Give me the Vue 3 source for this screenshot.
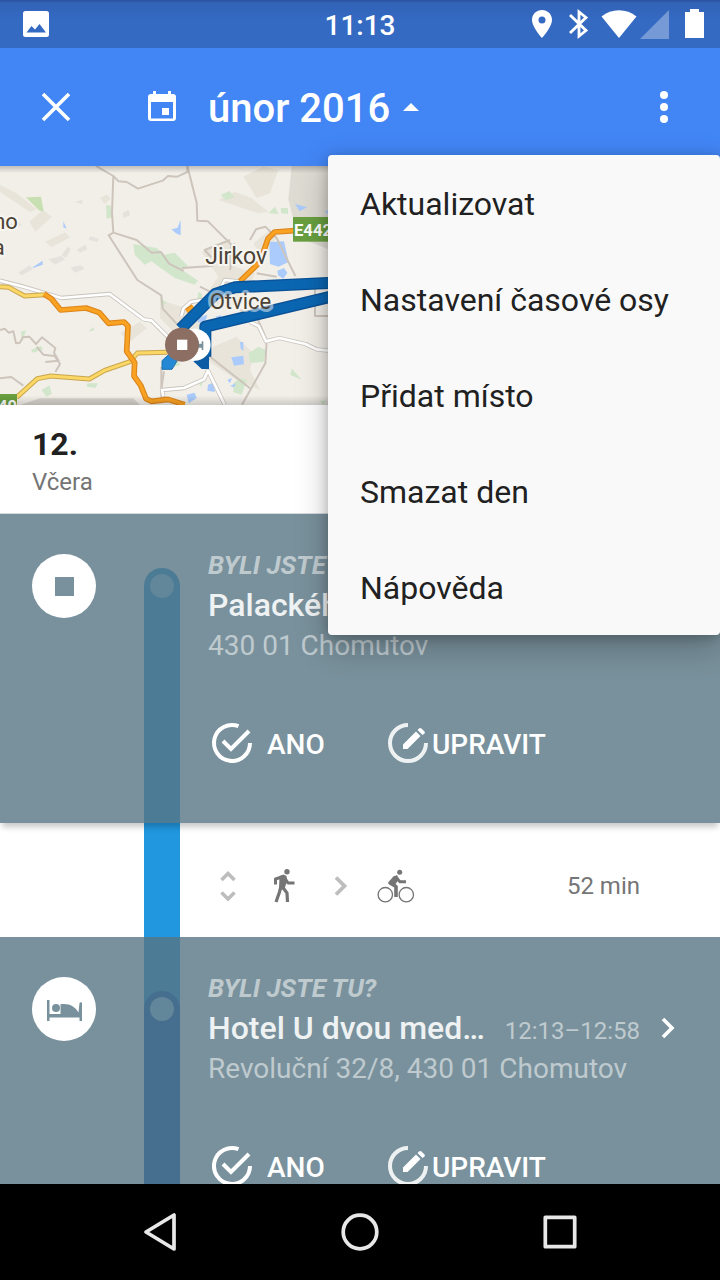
<template>
  <div class="screen">
    <header class="status-bar">
      <svg class="status-photo" viewBox="0 0 26 26">
        <path d="M2.500 0h21a2.500 2.500 0 0 1 2.500 2.500v21a2.500 2.500 0 0 1-2.500 2.500h-21a2.500 2.500 0 0 1-2.500-2.500v-21a2.500 2.500 0 0 1 2.500-2.500zM3.500 21.500h19.500L16.500 13l-4.500 5.500-3.500-3.500z" fill="#fff" fill-rule="evenodd" />
      </svg>
      <span class="clock">11:13</span>
      <svg class="status-icons" viewBox="0 0 176 30">
        <path d="M10 1C4.400 1 0 5.300 0 10.800 0 18.200 10 29 10 29s10-10.800 10-18.200C20 5.300 15.600 1 10 1zm0 6.500a3.500 3.500 0 1 1 0 7 3.500 3.500 0 0 1 0-7z" fill="#fff" fill-rule="evenodd" />
        <path d="M38 6l16 15.500L47 27V3l7 5.500L38 24" fill="none" stroke="#fff" stroke-width="2.800" />
        <path d="M69.500 7.500C79.500-.8 94.500-.8 104.500 7.500L87 29z" fill="#fff" />
        <path d="M137 1v29h-29z" fill="#fff" fill-opacity=".32" />
        <path d="M153 3h5V0h9v3h5v26h-19z" fill="#fff" />
      </svg>
    </header>

    <div class="toolbar">
      <button class="tool close" aria-label="Zavřít">
        <svg viewBox="0 0 48 48"><path d="M11 11l26 26M37 11L11 37" stroke="#fff" stroke-width="3.600" /></svg>
      </button>
      <button class="month">
        <svg class="calendar" viewBox="0 0 48 48">
          <path d="M15 8h3v3h12V8h3v3h2a3 3 0 0 1 3 3v21a3 3 0 0 1-3 3H13a3 3 0 0 1-3-3V14a3 3 0 0 1 3-3h2zM13 19v16.500h22V19zM24 25h7v7h-7z" fill="#fff" fill-rule="evenodd" />
        </svg>
        <span>únor 2016</span>
        <svg class="caret" viewBox="0 0 16 8"><path d="M0 8l8-8 8 8z" fill="#fff" /></svg>
      </button>
      <button class="tool" aria-label="Další možnosti" @click="menuOpen = !menuOpen">
        <svg viewBox="0 0 48 48" fill="#fff">
          <circle cx="24" cy="12" r="4" /><circle cx="24" cy="24" r="4" /><circle cx="24" cy="36" r="4" />
        </svg>
      </button>
    </div>

    <main class="timeline">
      <svg class="map" viewBox="0 18 2160 717" preserveAspectRatio="xMinYMin slice">
        <defs>
          <linearGradient id="edge" x1="0" y1="0" x2="0" y2="1">
            <stop offset="0" stop-color="#000" stop-opacity=".2" />
            <stop offset=".03" stop-color="#000" stop-opacity="0" />
            <stop offset=".96" stop-color="#000" stop-opacity="0" />
            <stop offset="1" stop-color="#000" stop-opacity=".15" />
          </linearGradient>
        </defs>
        <rect y="18" width="2160" height="717" fill="#f2efe9" />
        <!-- built-up areas -->
        <g fill="#e8e4d9">
          <path d="M0 75l50 25 60 48-20 8-90-60zM88 185l40-35 28 20-50 45zM135 245l60-28 15 15-55 30zM730 50l60-30 45 10-25 70-40 15zM655 120l50-25 50 20 50 40-30 5-60-20zM605 275l80-35 30 30-10 50 60 20-40 90-80 20-45-20 55-80zM480 420l80 25 60 60-20 70-60-40-60-60zM760 250l50-40 20 20-40 70zM640 560l70-30 50 50-10 50 30 60-70-30-90-60zM360 520l60-35 20 20-50 40zM300 115l20-12 12 14-18 15z" />
          <path d="M875 18h110v250l-75-30-30-60-15-60z" fill="#dedbd3" />
          <path d="M60 735l60-20 280 0 20 20z" fill="#d6d3cb" />
        </g>
        <g fill="#e3e2dc">
          <path d="M25 195l30-12 10 12-30 14zM145 298l40-10 10 10-30 16zM185 285l18-24 10 6-14 26zM230 270l26-16 6 14-22 10zM55 338l34-22 10 12-34 18zM212 322l30-6 12 10-30 12zM270 228l26 8-4 10-26-6zM368 160l18-10 4 16-20 8zM225 125l24-6-4 14z" />
        </g>
        <!-- woods -->
        <g fill="#d2e6cb">
          <path d="M78 112l45-2 8 45-14-4z" fill="#c7dfb1" />
          <path d="M318 135l14 2 8 34-20 5zM400 252l70 12 24 20 30-6 40 40-20 10 50 34-10 12-60-20-70-50-20 10-30-30-4-30zM662 105l26-12 16 18-26 10zM805 160l20-20 10 22zM842 144l22 0 0 18-20-2zM595 395l12 8-4 24-12-6zM480 410l20 20-16 8zM745 580l30-20 22 10-6 35-40 4zM700 670l20-15 20 5-15 45-25-8zM875 625l30 34-34-14zM62 515l16-4-10 34zM92 570l30-12 8 10-30 10zM125 690l24-14 6 26-16 8zM262 670l32 0-8 14-26-4zM508 605l24-4 10 14-20 6zM265 515l14-14 4 10zM590 665l20-5-6 20z" />
          <path d="M960 722h18l-8 12z" />
        </g>
        <g fill="#aacbfc">
          <path d="M885 132l36 10-22 12zM808 246l44-2 14 62-30 14-26-8zM832 332l20-8 10 14-12 18-16-10zM514 208l18-4 10-24v46l-14-6zM98 322l30-20v12l-28 10zM190 184l10 22-10-4zM592 474l30-10-4 16-24 8zM645 470l18-4 0 14zM694 592l36-5 2 26-30 4zM720 546l10 0 0 26-8-6zM624 674l20-8v30l-22-4zM560 704l24-6 6 16-24 16zM682 660l14-6-6 16zM690 678l18-8-6 12z" />
          <path d="M972 152h12v10z" />
        </g>
        <!-- minor roads -->
        <g fill="none" stroke="#cdc5bc" stroke-width="6" stroke-linejoin="round">
          <path d="M288 18l52 30-4 110 4 60 70 22 45 38 28-2 24 35 44 22" />
          <path d="M340 48l16 16 24 2 34 20 74-24 16-14 28 2 30-14V18" />
          <path d="M562 18l28 110 2 54 32 2 58 58 12 12-4 60" />
          <path d="M340 218l-14 8 86 134 72 46 4 40 50 54" />
          <path d="M0 510l14-4 12 12 14-4 8 36 12-2 8-16 20-2 20 22 18-20 40 32-4 14 14 24-40 4" />
          <path d="M110 560l20 24 34 4 16 24-14 24" />
          <path d="M0 655l34-4 36 26" />
          <path d="M750 240l18-32 28-8 34 34 56 114" />
          <path d="M690 240l-76 30 20 22M546 324l90-6 10-20M600 380l60 30M484 620v110M492 634l-8 54 16 40" />
          <path d="M690 330l14-80M770 340l60 10M720 450l50 20 30 70-4 70-70 124M630 590l120 95M945 380v88h40" />
        </g>
        <!-- white roads -->
        <g fill="none" stroke-linejoin="round">
          <path d="M0 362l70 18 114 34 145-12 102 76 24 4 54 54M544 468l6-22 22-20 60-10M664 380l10-20 40 4 20 10M984 572l-34-4-34-16-78-18-40 10-22-46-26-12M490 708l-4-18 66-6 60-26 12-26 50 102" stroke="#c9c4bd" stroke-width="13" />
          <path d="M0 362l70 18 114 34 145-12 102 76 24 4 54 54M544 468l6-22 22-20 60-10M664 380l10-20 40 4 20 10M984 572l-34-4-34-16-78-18-40 10-22-46-26-12M490 708l-4-18 66-6 60-26 12-26 50 102" stroke="#fff" stroke-width="8" />
        </g>
        <!-- main roads -->
        <g fill="none" stroke-linejoin="round">
          <path d="M0 380l26 2 48 26 60-4M50 712l62-56 40-8 116 9 46-26 76-26 22-26 90-2" stroke="#c9a54e" stroke-width="15" />
          <path d="M0 380l26 2 48 26 60-4M50 712l62-56 40-8 116 9 46-26 76-26 22-26 90-2" stroke="#fbd765" stroke-width="9" />
          <path d="M132 402l22 14 28 34 76-6 40 14 28 32 46-4 12 12-4 76 24 34-2 40 20 28 16 40 16 8 50-6 50 16M560 454l20-14M720 364l60-58 24-70 20-20 60-4" stroke="#dc861c" stroke-width="17" />
          <path d="M132 402l22 14 28 34 76-6 40 14 28 32 46-4 12 12-4 76 24 34-2 40 20 28 16 40 16 8 50-6 50 16M560 454l20-14M720 364l60-58 24-70 20-20 60-4" stroke="#faa222" stroke-width="10" />
        </g>
        <g class="road-sign">
          <rect x="879" y="171" width="150" height="74" fill="#699f40" />
          <text x="882" y="228" font-size="50">E442</text>
          <rect y="702" width="51" height="40" fill="#699f40" />
          <text x="-34" y="757" font-size="50">E49</text>
        </g>
        <!-- recorded route -->
        <path d="M486 602l22-20h36l-28 46h-30z" fill="#2488d4" stroke="#1f72b0" stroke-width="3" />
        <g fill="none" stroke-linejoin="round">
          <path d="M1200 364L984 369 704 382l-58 20-104 104M1200 360L984 412 616 500v90M616 610l-20-20" stroke="#0a5298" stroke-width="36" />
          <path d="M1200 364L984 369 704 382l-58 20-104 104M1200 360L984 412 616 500v90M616 610l-20-20" stroke="#0b66b2" stroke-width="28" />
        </g>
        <path d="M580 604l25 23h22v-50z" fill="#0b5ba4" />
        <g class="place">
          <text x="616" y="312" font-size="69">Jirkov</text>
          <text x="629" y="447" font-size="66" class="faded">Otvice</text>
          <text x="-84" y="208" font-size="66">Brno</text>
          <text x="-22" y="286" font-size="66">a</text>
        </g>
        <circle cx="584" cy="554" r="48" fill="#fff" />
        <path d="M592 544h5v7h8v-7h5v26h-5v-7h-13z" fill="#79919c" />
        <circle cx="546" cy="554" r="51" fill="#8d6e63" />
        <rect x="531" y="539" width="31" height="31" fill="#fff" />
        <rect y="18" width="2160" height="717" fill="url(#edge)" />
      </svg>

      <div class="day">
        <h1>12.</h1>
        <p>Včera</p>
      </div>

      <template v-for="(visit, i) in visits" :key="visit.title">
        <section class="visit">
          <div class="badge">
            <svg viewBox="0 0 64 64" fill="#79919c">
              <rect v-if="visit.icon === 'stop'" x="23" y="23" width="19" height="19" />
              <path v-else d="M15 23h2.500v14h11V27H32c7 0 11 3 14.500 8.500L47.500 26c.3-1 2.500-1 2.500 0v18h-2.500v-3.500h-30V44H15zM24 27a4 4 0 1 1 0 8 4 4 0 0 1 0-8z" />
            </svg>
          </div>
          <div class="rail" :class="{ through: i > 0 }">
            <div class="rail-end"><span class="stop-dot"></span></div>
          </div>
          <div class="details">
            <p class="question">BYLI JSTE TU?</p>
            <div class="title-row">
              <h2>{{ visit.title }}</h2>
              <time v-if="visit.time">{{ visit.time }}</time>
              <button v-if="visit.time" class="open" aria-label="Podrobnosti">
                <svg viewBox="0 0 48 40"><path d="M19 11l9 9-9 9" fill="none" stroke="#fff" stroke-width="3.600" /></svg>
              </button>
            </div>
            <p class="address">{{ visit.address }}</p>
            <div class="actions">
              <button class="yes">
                <svg viewBox="0 0 48 48" fill="none" stroke="#fff" stroke-width="4">
                  <path d="M30.500 7.200A18 18 0 1 0 42 24" />
                  <path d="M15 22l8 8L41 12" />
                </svg>
                <span>ANO</span>
              </button>
              <button>
                <svg viewBox="0 0 48 48">
                  <path d="M24 6a18 18 0 1 0 18 18" fill="none" stroke="#eef1f2" stroke-width="4" />
                  <path d="M19 25.500L32 12.500l4.500 4.500-13 13H19zM33.500 11l1.500-1.500c.8-.8 1.700-.8 2.500 0l3 3c.5.500.5 1.200 0 2L38.500 16z" fill="#fff" />
                </svg>
                <span>UPRAVIT</span>
              </button>
            </div>
          </div>
        </section>

        <section v-if="i === 0" class="transit">
          <div class="transit-rail"></div>
          <div class="transit-info">
            <svg class="modes" viewBox="0 0 212 48">
              <path d="M13.500 18l6.500-6.500 6.500 6.500M13.500 30.500l6.500 6.500 6.500-6.500" fill="none" stroke="#bdbdbd" stroke-width="3.600" />
              <g fill="none" stroke="#757575" stroke-linejoin="round">
                <circle cx="79" cy="9.700" r="2.700" fill="#757575" stroke="none" />
                <path d="M75.500 14.500l-8 2.500v5.500" stroke-width="3" />
                <path d="M71.500 14l4-1.500 3 1.500.5 5-2.500 8-5.500 1z" fill="#757575" stroke="none" />
                <path d="M76.500 15.500l3.500 5.500h6.500" stroke-width="3" />
                <path d="M73 24l-1.500 6-3.500 10M74.500 25l4.500 6 .5 9" stroke-width="3.200" />
              </g>
              <path d="M128 15.500l8.500 8.500-8.500 8.500" fill="none" stroke="#bdbdbd" stroke-width="3.800" />
              <g fill="none" stroke="#757575">
                <circle cx="177.300" cy="32.700" r="7.200" stroke-width="1.300" />
                <circle cx="198.300" cy="32.700" r="7.200" stroke-width="1.300" />
                <circle cx="191.700" cy="10.300" r="2.500" fill="#757575" stroke="none" />
                <path d="M187.500 15l-5.500 6 6 3.500V35" stroke-width="3.600" stroke-linejoin="round" />
                <path d="M187.500 15l4.500 4.700h6" stroke-width="3" />
                <path d="M185 15l4-2 2 4-4 6-4-2z" fill="#757575" stroke="none" />
              </g>
            </svg>
            <span class="duration">52 min</span>
          </div>
        </section>
      </template>
    </main>

    <nav class="nav-bar">
      <button aria-label="Zpět">
        <svg viewBox="0 0 48 48"><path d="M10 24l28-17v34z" /></svg>
      </button>
      <button aria-label="Domů">
        <svg viewBox="0 0 48 48"><circle cx="24" cy="24" r="16.800" /></svg>
      </button>
      <button aria-label="Přehled">
        <svg viewBox="0 0 48 48"><rect x="9.300" y="9.300" width="29.400" height="29.400" /></svg>
      </button>
    </nav>

    <div v-if="menuOpen" class="menu" role="menu">
      <button v-for="item in menuItems" :key="item" role="menuitem" @click="menuOpen = false">{{ item }}</button>
    </div>
  </div>
</template>

<script setup>
import { ref } from "vue";

const menuOpen = ref(true);

const menuItems = [
  "Aktualizovat",
  "Nastavení časové osy",
  "Přidat místo",
  "Smazat den",
  "Nápověda",
];

const visits = [
  { icon: "stop", title: "Palackého", address: "430 01 Chomutov" },
  {
    icon: "hotel",
    title: "Hotel U dvou med…",
    time: "12:13–12:58",
    address: "Revoluční 32/8, 430 01 Chomutov",
  },
];
</script>

<style>
body {
  margin: 0;
  background: #fff;
}
</style>

<style scoped>
.screen {
  position: relative;
  display: flex;
  flex-direction: column;
  height: 100vh;
  overflow: hidden;
  font-family: Roboto, "Noto Sans", sans-serif;
  color: #212121;
}
h1, h2, p {
  margin: 0;
}
button {
  padding: 0;
  border: 0;
  background: none;
  color: inherit;
  font: inherit;
  cursor: pointer;
}
svg {
  display: block;
  flex: none;
}

.status-bar {
  flex: none;
  display: grid;
  grid-template-columns: 1fr auto 1fr;
  align-items: center;
  height: 48px;
  padding: 0 12px;
  background: linear-gradient(#2a52a0, #3163b6 3px, #356ac3 20px);
  color: #fff;
}
.status-photo {
  width: 26px;
  height: 26px;
  margin-left: 11px;
}
.clock {
  padding-top: 4px;
  font-size: 28px;
  font-weight: 500;
  line-height: 44px;
}
.status-icons {
  justify-self: end;
  width: 176px;
  height: 30px;
}

.toolbar {
  flex: none;
  display: flex;
  align-items: center;
  height: 118px;
  padding: 0 32px;
  background: #4285f4;
  color: #fff;
}
.tool svg,
.calendar {
  width: 48px;
  height: 48px;
}
.month {
  display: flex;
  align-items: center;
  margin: 0 auto 0 58px;
  font-size: 40px;
  font-weight: 500;
}
.month span {
  margin: 0 13px 0 22px;
  padding-top: 2px;
}
.caret {
  width: 16px;
  height: 8px;
}

.timeline {
  flex: 1;
  min-height: 0;
  overflow: hidden;
}
.map {
  width: 100%;
  height: 239px;
}
.road-sign text {
  fill: #fff;
  font-weight: 700;
}
.place text {
  fill: #4b4236;
  stroke: #f7f5f0;
  stroke-width: 12px;
  stroke-linejoin: round;
  paint-order: stroke;
}
.place .faded {
  stroke-width: 18px;
  stroke-opacity: .5;
}

.day {
  padding: 19px 32px 12px;
  border-bottom: 1px solid #d5dadd;
}
.day h1 {
  font-size: 32px;
  line-height: 40px;
}
.day p {
  font-size: 24px;
  line-height: 37px;
  color: #757575;
}

.visit {
  position: relative;
  display: flex;
  background: #79919c;
  color: #fff;
  box-shadow: 0 6px 6px -2px rgba(0, 0, 0, .22);
}
.badge {
  flex: none;
  width: 64px;
  height: 64px;
  margin: 40px 48px 0 32px;
  border-radius: 50%;
  background: #fff;
}
.rail {
  flex: none;
  display: flex;
  width: 36px;
  margin-right: 28px;
  padding-top: 54px;
}
.rail-end {
  flex: 1;
  padding: 6px;
  border-radius: 18px 18px 0 0;
  background: #4b7b95;
}
.rail.through {
  background: linear-gradient(#4b7b95 80px, #466f8f 80px);
}
.rail.through .rail-end {
  background: #466f8f;
}
.stop-dot {
  display: block;
  width: 24px;
  height: 24px;
  border-radius: 50%;
  background: #62869a;
}
.details {
  flex: 1;
  min-width: 0;
  padding: 31px 28px 40px 0;
}
.question {
  font-size: 26px;
  font-style: italic;
  font-weight: 700;
  line-height: 40px;
  color: #bfcacf;
}
.title-row {
  display: flex;
  align-items: baseline;
  height: 40px;
}
.title-row h2 {
  flex: 1;
  font-size: 32px;
  font-weight: 500;
  line-height: 40px;
  white-space: nowrap;
  color: #eff2f3;
}
.title-row time {
  font-size: 24px;
  line-height: 40px;
  color: #bfcacf;
}
.open {
  align-self: center;
  margin-left: 4px;
}
.open svg {
  width: 48px;
  height: 40px;
}
.address {
  font-size: 28px;
  line-height: 42px;
  color: #bfcacf;
}
.actions {
  display: flex;
  margin-top: 36px;
}
.actions button {
  display: flex;
  align-items: center;
  min-width: 176px;
  height: 80px;
  font-size: 28px;
  font-weight: 500;
}
.actions svg {
  width: 48px;
  height: 48px;
}
.actions span {
  padding-top: 2px;
}
.yes {
  gap: 11px;
}

.transit {
  display: flex;
  height: 114px;
  padding: 0 80px 0 144px;
}
.transit-rail {
  width: 36px;
  margin-right: 28px;
  background: #2097df;
}
.transit-info {
  flex: 1;
  display: flex;
  align-items: center;
  justify-content: space-between;
  padding-top: 11px;
}
.modes {
  width: 212px;
  height: 48px;
}
.duration {
  font-size: 24px;
  color: #757575;
}

.nav-bar {
  position: relative;
  flex: none;
  display: flex;
  justify-content: center;
  height: 96px;
  background: #000;
}
.nav-bar button {
  display: flex;
  flex: 0 1 200px;
  align-items: center;
  justify-content: center;
}
.nav-bar svg {
  width: 48px;
  height: 48px;
  fill: none;
  stroke: #e8e8e8;
  stroke-width: 3.700px;
  stroke-linejoin: round;
}

.menu {
  position: absolute;
  top: 155px;
  right: 0;
  display: flex;
  flex-direction: column;
  width: 392px;
  border-radius: 4px;
  background: #f9f9f9;
  box-shadow: 0 12px 32px rgba(0, 0, 0, .25), 0 2px 12px rgba(0, 0, 0, .2);
}
.menu button {
  height: 96px;
  padding: 2px 32px 0;
  font-size: 32px;
  text-align: left;
}
</style>
